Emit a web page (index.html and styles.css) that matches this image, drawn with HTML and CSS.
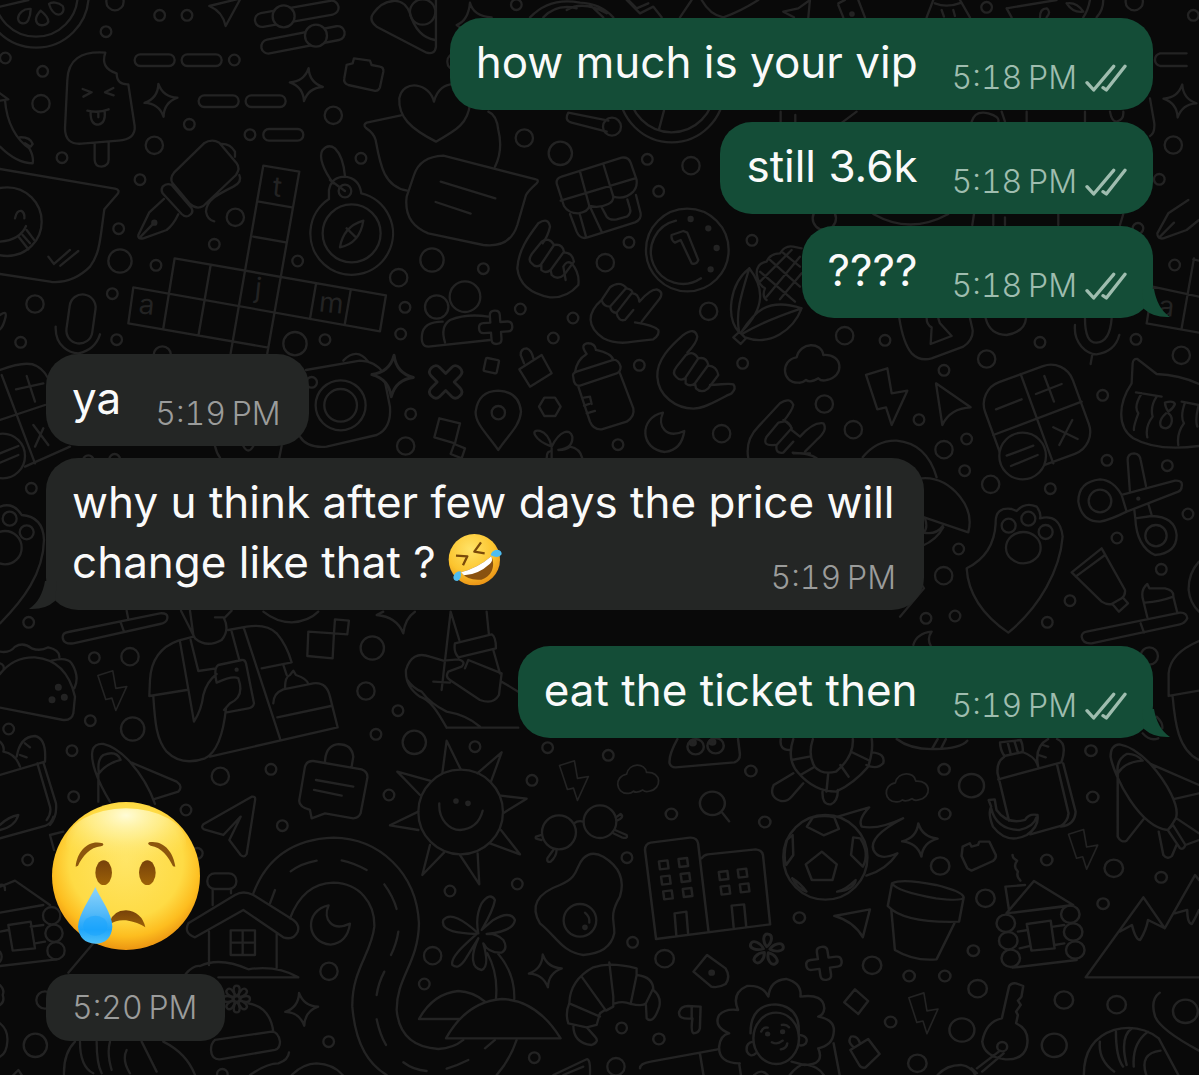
FILE: index.html
```html
<!DOCTYPE html>
<html lang="en">
<head>
<meta charset="utf-8">
<meta name="viewport" content="width=device-width, initial-scale=1">
<title>Chat</title>
<link rel="stylesheet" href="styles.css">
</head>
<body>
<svg class="wallpaper" viewBox="0 0 1199 1075" preserveAspectRatio="xMidYMin slice" aria-hidden="true">
<defs>
<marker id="ring-s" class="doodle" markerUnits="userSpaceOnUse" markerWidth="60" markerHeight="60" refX="30" refY="30"><circle cx="30" cy="30" r="16"/></marker>
<marker id="ring-m" class="doodle" markerUnits="userSpaceOnUse" markerWidth="80" markerHeight="80" refX="40" refY="40"><circle cx="40" cy="40" r="26"/></marker>
<marker id="ring-l" class="doodle" markerUnits="userSpaceOnUse" markerWidth="90" markerHeight="90" refX="45" refY="45"><circle cx="45" cy="45" r="35"/></marker>
<marker id="pane" class="doodle" markerUnits="userSpaceOnUse" markerWidth="60" markerHeight="60" refX="30" refY="30"><path d="M17 19L41 16L44 40L20 43Z"/></marker>
<path id="star" d="M0-50Q8-8 50 0Q8 8 0 50Q-8 8-50 0Q-8-8 0-50Z"/>
<path id="plus" d="M-15-15V-36Q-15-50 0-50T15-36V-15H36Q50-15 50 0T36 15H15V36Q15 50 0 50T-15 36V15H-36Q-50 15-50 0T-36-15Z"/>
<path id="cloud" d="M-42 53C-92 55-97-15-47-23C-37-70 28-70 33-30C93-35 98 35 43 45Q28 50 18 40Q-7 55-19 45Q-32 55-42 53Z"/>
<path id="bolt" d="M-62-65L2-85L15-10L62-18L15 85L-2 32L-28 38Z"/>
<path id="moon" d="M-6-60C-80-45-75 52 0 58Q50 52 58-5C5 20-25-18-6-60Z"/>
<path id="petal" d="M0-8C-12-20-12-40 0-40S12-20 0-8Z"/>
<path id="fingers" d="M858 765Q880 750 895 775M828 830Q815 820 830 800L858 765M895 775L855 835Q840 845 828 830M895 775Q920 770 925 795L885 850Q870 862 857 850V835M925 797Q950 798 955 825L925 865Q905 882 888 865L885 850"/>
</defs>
<g class="doodle" transform="scale(.3333)">
<polyline class="rings-s" points="318,95 479,46 561,46 16,174 128,214 186,473 568,373 420,539 703,180 750,404 1083,475 356,686 468,796 643,733 893,783 337,881 62,1027 350,1019 975,1019"/>
<polyline class="rings-m" points="345,5 123,311 463,436 1000,346 706,652 105,912 487,1065 1368,185"/>
<polyline class="rings-l" points="360,783 885,1031"/>
<circle cx="108" cy="-15" r="158"/><circle cx="108" cy="-15" r="125"/>
<path d="M0 20L85 0M92 27C70 25 55 40 54 55C56 72 75 75 84 62C90 50 92 40 92 27ZM122 32C110 45 104 60 112 70C122 80 140 76 145 65C145 50 132 40 122 32ZM147 12C155 5 175 6 188 18C194 30 188 44 175 44C160 42 152 28 147 12ZM628 18L722-5L677 78Q668 35 628 18Z"/>
<rect x="-20" y="-21" width="254" height="42" rx="21" transform="translate(785 60) rotate(-10)"/>
<rect x="-20" y="-21" width="254" height="42" rx="21" transform="translate(804 140) rotate(-11)"/>
<circle class="solid" cx="851" cy="49" r="33"/><circle class="solid" cx="948" cy="107" r="33"/>
<path d="M1308 0V140Q1305 165 1280 158L1130 80Q1105 60 1120 40Q1145 5 1180 3Q1215 0 1230 40Q1250 110 1305 120"/><circle cx="1268" cy="36" r="38"/>
<rect x="404" y="163" width="120" height="35" rx="17"/><rect x="545" y="163" width="120" height="35" rx="17"/><rect x="596" y="286" width="120" height="35" rx="17"/><rect x="737" y="286" width="120" height="35" rx="17"/><rect x="790" y="387" width="120" height="35" rx="17"/>
<use href="#star" transform="translate(483 301) rotate(-9)"/><use href="#star" transform="translate(919 254) rotate(8)"/>
<path d="M1040 195L1058 190L1062 175L1110 182L1115 195L1140 200Q1152 202 1150 215L1140 262Q1135 275 1122 272L1045 255Q1030 250 1033 235Z"/>
<path d="M1302 305C1290 250 1210 235 1198 295C1195 350 1230 385 1308 425C1370 390 1405 370 1410 310C1405 240 1320 230 1302 305ZM1203 346L1100 368Q1088 374 1098 384Q1122 400 1127 420C1140 490 1150 560 1222 572"/>
<path d="M316 158Q205 150 202 240L195 385Q195 435 245 431L355 422Q408 418 404 378L385 253Q350 255 350 220Q300 205 316 158ZM284 430V480Q285 500 305 500Q326 498 326 478V425M248 267L275 277L250 290M340 264L315 277L341 286M262 332Q295 340 326 328M272 334Q270 374 295 374Q318 370 314 332M295 338V352"/>
<path d="M0 280L25 298L0 302M15 300C20 370 50 420 88 445Q102 470 98 490Q50 490 0 440M58 412Q90 410 98 432L92 440L75 430"/>
<path d="M0 507L345 566Q362 570 352 583L313 628C300 720 300 760 270 800Q220 850 155 846L0 822M0 725Q60 720 78 678M45 655Q50 630 65 633Q75 640 73 655M57 712L85 748M68 705L90 730M80 690L104 722M145 770L162 792L210 750M181 797L235 753"/><circle cx="22" cy="665" r="103"/>
<path d="M612 430Q635 415 658 428L710 490Q722 505 708 525L610 618Q590 630 570 612L518 550Q508 535 522 518ZM488 560Q500 548 515 555L575 625Q582 640 565 648Q555 652 545 642L488 580Q482 570 488 560ZM492 597L448 637L415 705Q412 718 430 715L500 690Q520 675 535 643M422 710L463 668M662 432Q690 430 705 455V470M718 525Q728 545 700 560C650 585 620 600 618 635Q622 660 643 664"/><circle class="dot" cx="463" cy="668" r="6"/>
<path d="M987 597A124 124 0 1 0 1084 580M987 597V570Q995 530 1035 530Q1078 535 1084 580M1000 550C970 510 955 470 968 450Q985 430 1005 445Q1030 470 1035 528M990 540L1035 573M1090 662Q1080 730 1020 742Q1030 680 1090 662M1040 685L1068 712"/><circle cx="1055" cy="700" r="87"/><circle cx="1035" cy="573" r="19"/>
<path d="M898 515L790 497L692 1060M898 515L802 1060M777 605L876 622M760 710L858 727M524 775L1158 886L1140 994L400 862L385 970L805 1043M524 775L490 985M632 795L596 1003M948 852L930 957M1052 872L1034 975"/>
<g class="letters"><text x="815" y="588" transform="rotate(6 815 588)">t</text><text x="762" y="892" transform="rotate(6 762 892)">j</text><text x="414" y="940" transform="rotate(6 414 940)">a</text><text x="955" y="934" transform="rotate(6 955 934)">m</text></g>
<rect x="-39" y="-74" width="78" height="148" rx="39" transform="translate(243 957) rotate(8)"/>
<path d="M167 980C165 1040 210 1060 235 1060Q285 1050 300 1003M0 945Q20 930 17 950Q10 980 0 988"/>
</g>
<g class="doodle" transform="translate(400 100) scale(.3333)">
<polyline class="rings-l" points="96,480 481,160 110,621"/>
<polyline class="rings-m" points="373,114 873,197 -4,533 616,488 926,634 965,1001 17,1038"/>
<polyline class="rings-s" points="250,506 15,622 361,627 519,654 460,714 742,178 776,274 687,427 1056,421 718,796 1028,790 32,942 654,1034 2,702"/>
<path d="M265 35Q290 45 295 90Q310 150 285 200M130 167Q60 170 42 225L20 290Q10 370 85 400L250 435Q330 445 352 375L378 285Q385 272 410 250Q418 240 408 238ZM122 245L286 295M107 306L212 341M505 38Q492 62 515 68L620 95M505 38L625 62M792 32L777 88"/>
<circle cx="636" cy="80" r="27"/><circle cx="815" cy="-30" r="157"/><circle cx="815" cy="-30" r="127"/>
<path d="M470 250Q468 235 485 230L665 173Q685 170 692 188L710 240Q712 260 702 272M482 302L705 235M470 250L492 318Q505 340 535 340Q565 335 568 318Q600 325 625 312Q640 305 640 290Q675 300 700 275M540 215L568 318M610 192L640 290M510 342L530 395Q540 418 560 413L705 367Q725 358 722 340L708 285M540 345L558 410M570 320L605 395M605 322L620 350Q630 362 650 358L680 350Q695 340 690 325L682 298"/>
<use href="#fingers" transform="translate(-433 -340)"/><use href="#fingers"/>
<path d="M490 500Q500 480 515 490Q540 520 535 555Q500 595 450 592Q360 575 352 505C355 450 385 410 415 370Q445 350 450 380Q445 405 428 430M490 500L497 540"/>
<path d="M605 600C560 640 560 680 610 715Q650 735 700 725L760 718Q780 705 775 690Q760 675 705 667M725 665L780 595Q792 575 770 568Q750 568 718 605M605 600L630 562Q660 540 680 565M605 600Q610 620 630 620L678 565M630 620Q635 640 650 638L695 580M680 565Q700 570 697 580Q715 580 718 605M650 640Q655 665 675 660L700 630"/>
<path d="M862 758Q890 730 892 710Q885 680 850 705C810 740 770 780 772 830C775 890 830 925 880 926C920 925 960 895 995 880Q1010 865 1000 853C985 848 960 855 930 855"/>
<circle cx="862" cy="450" r="124"/><path d="M828 362A96 96 0 1 0 903 535M815 405L850 393L862 398L895 480Q890 495 875 490L842 420L825 428Q812 420 815 405Z"/>
<g class="dot"><circle cx="872" cy="357" r="6"/><circle cx="925" cy="385" r="6"/><circle cx="950" cy="444" r="6"/><circle cx="932" cy="508" r="6"/></g>
<path d="M1048 505C990 550 975 650 1018 698M1048 505C1025 580 1005 640 1018 698M1048 505C1090 560 1100 620 1025 695C1060 640 1100 590 1205 625C1180 690 1110 740 1035 712M1205 625C1130 650 1080 670 1030 700M1018 696L1000 712L1022 732L1038 715ZM1070 520Q1070 490 1100 485Q1110 460 1140 460Q1155 435 1180 440L1205 445M1070 520Q1075 555 1095 565Q1085 590 1100 600M1080 515L1185 605M1110 480L1200 560M1145 455L1200 500M1100 590L1200 470M1075 550L1175 450M1140 598L1205 520"/>
<circle cx="195" cy="590" r="46"/><path d="M128 665Q70 665 66 705Q62 740 85 740L270 720M135 727Q120 680 150 660Q200 640 265 650"/>
<use class="solid" href="#plus" transform="translate(287 682) rotate(-4)"/><use href="#plus" transform="translate(137 846) rotate(45) scale(1.2)"/>
<rect x="-20" y="-20" width="40" height="40" rx="4" transform="translate(274 797) rotate(12)"/>
<path d="M358 808L425 765L455 820L390 860ZM372 790L362 765Q362 745 380 745Q395 750 400 775M433 893H465L482 920L466 948H433L417 920Z"/>
<path d="M520 832Q515 820 530 815L640 780Q655 778 662 800Q662 815 650 820L540 857Q522 860 520 832ZM525 817Q530 780 560 762Q540 735 560 730Q585 728 588 750Q635 760 640 780M535 860L570 965Q580 990 605 988L680 965Q705 950 700 925L660 820M552 893L570 890L575 912M552 917L568 912M560 940L585 933"/>
<path d="M295 1050C260 1000 225 970 227 935Q235 873 295 872Q358 875 363 935C360 980 320 1010 295 1050ZM118 955L180 970L165 1030L103 1012ZM163 1032L195 1045L185 1075M163 1032L152 1062L185 1075M455 1040C400 1020 390 985 420 993Q445 1000 455 1040C480 990 510 985 517 1010Q520 1045 475 1050Q500 1050 510 1040Q540 1045 547 1075M455 1045V1075M440 1075Q440 1050 455 1055"/><circle cx="295" cy="938" r="20"/>
<use href="#moon" transform="translate(795 998)"/>
<path d="M1045 1075Q1035 1020 1075 980L1140 910Q1170 890 1180 915Q1178 930 1150 965M1150 965Q1165 960 1175 985M1125 1035Q1085 1040 1100 1010L1135 968L1150 965M1175 985L1130 1035Q1125 1062 1150 1058L1180 1025M1180 1060H1230"/>
</g>
<g class="doodle" transform="translate(780 200) scale(.3333)">
<polyline class="rings-m" points="194,407 620,477 133,612 220,689 492,749 1204,466"/>
<polyline class="rings-s" points="315,421 492,511 780,427 1068,418 417,659 560,717 968,586 981,781 1184,195 1074,85"/>
<circle cx="133" cy="55" r="35"/>
<path d="M280 42Q390 105 505 42M582 42L577 75M640 42V75M835 42V75M1030 42L1020 75M675 52V75M1225 0L1165 40L1132 100Q1132 118 1150 115L1220 90L1257 60M1138 112L1182 68M1100 370L1118 260L1257 290M1100 370L1257 398M1242 175L1205 385M1240 178L1257 182"/>
<g class="letters"><text x="1133" y="345" transform="rotate(6 1133 345)">a</text></g>
<path d="M358 355Q370 430 395 460Q420 485 455 475L550 440Q580 420 578 390L570 355M440 355Q440 375 455 382L452 432L515 408L480 370L475 355M617 355Q630 405 680 405Q735 395 738 355M915 355Q915 430 950 428Q990 425 995 355M885 375C880 430 920 462 950 463Q1005 455 1018 405M937 463L932 492"/>
<use href="#cloud" transform="translate(97 495)"/><use href="#bolt" transform="translate(320 590)"/>
<path d="M468 550L572 622Q510 625 487 675Z"/>
<rect x="-140" y="-140" width="280" height="280" rx="70" transform="translate(771 654) rotate(-20)"/>
<path d="M722 522L820 790M640 705L905 605M648 628L725 598M768 582L845 552M793 528L822 605M820 682L893 717M877 660L838 735"/><circle class="solid" cx="728" cy="768" r="70"/><path d="M680 767L760 737M693 798L773 765"/>
<path d="M1257 552Q1200 525 1130 522L1072 477Q1060 475 1058 490L1055 550C1015 610 1010 680 1060 715Q1130 755 1257 738M1068 577L1145 590M1205 605L1257 615M1085 580Q1060 620 1075 640Q1060 680 1062 690M1130 590Q1110 620 1118 650Q1095 680 1102 712M1215 608Q1200 650 1212 670Q1190 700 1195 735M1255 620Q1245 660 1252 680M1155 608Q1180 600 1185 612Q1180 625 1165 635Q1155 620 1155 608M1158 640C1135 660 1135 685 1158 685C1180 680 1180 650 1165 640"/>
<path d="M35 690L60 710Q100 665 130 670Q145 690 110 720L75 755M10 660Q35 675 35 690M38 758Q90 760 110 775M248 772Q290 720 350 722Q440 730 470 832"/>
</g>
<g class="doodle" transform="translate(900 440) scale(.3333)">
<polyline class="rings-m" points="272,133 131,407 748,648"/>
<polyline class="rings-s" points="194,92 451,146 176,327 78,535 165,528 442,547 510,482 802,77 864,222 651,294 784,388"/>
<path d="M66 115Q130 110 180 170Q220 220 205 277L66 230M70 278Q110 285 128 258M66 318Q110 300 130 262M75 235Q85 265 70 278M66 435L72 445L0 530M40 615Q50 580 95 575Q80 595 92 617M728 880Q750 905 775 895M770 830Q790 850 787 865"/>
<path d="M200 385C270 350 285 290 287 250Q285 200 335 207L350 213Q375 185 410 200Q425 220 420 235Q480 220 488 290C480 390 420 500 325 578C255 530 205 470 200 385Z"/><circle cx="326" cy="257" r="21"/><circle cx="385" cy="236" r="21"/><circle cx="437" cy="276" r="21"/><ellipse cx="370" cy="323" rx="52" ry="47"/>
<path d="M665 165Q640 120 600 118Q535 125 535 185Q545 245 600 245Q630 240 680 215ZM665 165L825 122Q850 120 845 140Q845 150 835 155L680 215M690 158L683 60Q683 40 703 40Q720 42 722 60L738 138M703 210L706 235M745 192L755 225M706 235Q710 320 765 345Q830 340 830 285Q825 230 755 228Z"/><circle cx="600" cy="183" r="34"/><circle cx="768" cy="287" r="32"/><circle class="dot" cx="715" cy="176" r="3"/>
<path d="M605 325L675 450Q677 465 665 475L635 492Q620 495 605 485L515 397ZM527 410L615 345M637 492L657 515L684 490L668 472M545 590Q545 578 560 575L840 518Q860 517 862 535Q855 550 840 553L575 610Q548 612 545 590ZM722 550L732 578M742 532L730 482Q720 450 742 432L748 445L795 445Q822 450 820 470L832 518M735 488Q780 485 820 470M897 365Q865 400 866 450Q870 490 897 515M897 603Q810 640 806 700V768L897 752M818 770C825 850 835 930 897 960"/>
</g>
<g class="doodle" transform="translate(0 340) scale(.3333)">
<polyline class="rings-s" points="935,127 94,445 265,362 344,358"/>
<path d="M918 90L1080 62Q1130 65 1150 100L1170 200Q1175 265 1130 285L980 320Q920 325 900 290M1030 62Q1070 20 1105 65"/><circle cx="1022" cy="196" r="75"/><circle cx="1022" cy="196" r="49"/>
<use class="solid" href="#star" transform="translate(1178 108) rotate(4) scale(1.25)"/>
<path d="M0 90Q80 60 110 78Q140 95 150 130M5 105L105 370M0 240L135 195M48 148L130 130M80 108L105 185M100 255L145 315M130 265L105 320M75 380L210 320"/><circle class="solid" cx="8" cy="348" r="67"/><path d="M0 340L55 318M0 368L55 345"/>
<path d="M0 500Q40 485 65 525Q130 530 132 600C130 700 70 780 0 850M645 318Q650 340 660 353M845 318L838 353M730 318Q745 345 760 318"/><circle cx="29" cy="536" r="21"/><circle cx="80" cy="577" r="21"/><circle cx="15" cy="623" r="50"/>
</g>
<g class="doodle" transform="translate(0 600) scale(.3333)">
<polyline class="rings-l" points="398,387 1117,144 1243,427"/>
<polyline class="rings-m" points="390,170 1098,273 661,529"/>
<polyline class="rings-s" points="86,67 283,173 271,362 26,387 216,452 221,590 1194,332 1128,403 813,508 1425,440 1167,585 558,630"/>
<path d="M188 112Q188 98 205 96L480 40Q505 38 502 55Q500 68 480 72L220 130Q190 134 188 112ZM362 67L372 95M380 32L385 58"/>
<path d="M0 222Q40 170 105 172Q200 180 225 290L220 340Q215 362 190 360L0 323M0 155Q30 160 45 140Q70 125 95 145Q120 155 145 142Q180 150 178 172M155 182Q200 170 215 190Q240 230 223 265M0 190Q15 195 10 210"/>
<g class="dot"><circle cx="175" cy="262" r="7"/><circle cx="156" cy="299" r="7"/><circle cx="193" cy="292" r="7"/><circle cx="710" cy="209" r="3"/></g>
<use href="#bolt" transform="translate(337 272) scale(.7)"/>
<path d="M448 288L450 240Q455 150 535 122L580 110M448 288L560 270M460 290C465 370 470 420 500 455Q545 500 615 475Q665 450 678 325M540 125L582 365Q605 330 610 285Q620 245 650 222M572 120L595 213L648 205M543 32L580 105L585 115Q620 145 665 120Q690 90 672 55L695 32M570 32L580 105M645 52H670M685 90L740 80Q800 70 830 100Q860 135 875 187L785 205M732 85L840 415M695 95L718 180M655 195L725 180Q735 178 738 190L762 310Q760 322 745 325L680 337M655 195Q640 205 650 248Q700 225 715 235Q735 290 690 310L672 330M850 195L860 225M630 470L1013 382L990 290Q980 245 940 250L850 268Q820 280 820 310M832 352L993 318M855 265Q855 230 870 225L880 212L888 225Q920 235 925 252"/>
<path d="M925 95L1002 100L998 175L922 168ZM1005 58L1047 62L1042 103L1002 100ZM1150 35L1130 45Q1190 50 1210 100Q1215 55 1245 35M790 35Q830 67 875 67Q925 65 955 35"/>
<path d="M1340 383C1310 330 1290 300 1260 290Q1215 260 1218 210Q1235 150 1290 170L1330 182L1375 178Q1400 185 1385 200L1345 215Q1335 230 1350 240L1440 300Q1480 315 1497 285L1505 220L1405 180L1395 205M1340 383H1555M1222 240Q1240 265 1265 275Q1290 310 1340 335Q1400 345 1440 380M1505 245L1555 275M1352 35L1325 270M1300 245L1350 248M1352 35L1378 120M1460 35L1467 105M1365 130L1475 103Q1488 110 1488 145L1375 172Q1360 155 1365 130ZM1480 150L1500 220"/>
<path d="M0 425Q15 440 10 455Q45 460 60 500M50 470Q60 410 105 408Q140 415 135 485L0 525M75 430L90 442M60 465L80 472M112 490L150 620Q155 640 140 660M130 487L168 610Q172 650 150 675"/>
<path d="M330 605C290 540 270 480 278 450Q285 430 310 432Q345 440 385 480Q440 540 465 612M297 520Q290 480 310 465Q350 450 362 480Q320 490 297 520M295 520V605M395 488L530 545Q550 560 535 575L465 597"/>
<path d="M975 490Q975 440 1010 433Q1055 430 1060 470L1055 500M940 483L1085 508Q1105 515 1102 535L1082 640Q1075 655 1060 655L975 640L935 655L930 630Q895 620 898 600L915 500Q920 482 940 483ZM948 540L1060 560M942 570L1025 587"/>
</g>
<g class="doodle" transform="translate(200 730) scale(.3333)">
<polyline class="rings-m" points="387,724 698,677 1248,1010"/>
<polyline class="rings-s" points="247,287 1043,53 1225,76 996,151 750,483 952,462 1281,383 1298,637 673,762 386,935 1265,894 1003,983 67,1033"/>
<path d="M10 283L155 200Q168 198 165 212L140 372Q132 385 122 375L88 330L122 260L70 315L12 298Q2 292 10 283Z"/>
<circle cx="782" cy="246" r="127"/><path d="M727 130L740 32L782 118M832 130L905 67L873 155M903 197L980 206L912 248M903 300L960 373L870 340M833 370L838 463L780 375M732 368L667 435L690 345M655 300L570 286L655 245M660 195L592 125L692 153M718 220C715 270 750 300 780 300Q835 295 848 242"/>
<g class="dot"><circle cx="768" cy="213" r="5"/><circle cx="804" cy="220" r="5"/><circle cx="1155" cy="592" r="5"/></g>
<use href="#bolt" transform="translate(1122 152) scale(.7)"/><use href="#cloud" transform="translate(1315 150) scale(.75)"/>
<circle cx="1077" cy="307" r="51"/><circle cx="1200" cy="275" r="49"/><path d="M1122 280Q1135 270 1150 275M1025 315L1008 320Q1003 328 1025 330M1062 357L1042 385Q1040 398 1052 395Q1070 380 1070 358M1248 262L1262 252Q1275 262 1250 272M1245 300L1280 315Q1285 328 1265 322L1240 310"/>
<path d="M160 490Q220 330 400 323C540 325 650 430 657 580C655 700 590 740 590 840Q600 950 715 957Q760 955 790 930M270 565Q310 460 400 458C480 460 525 520 523 590C515 670 455 720 457 830C465 930 500 1000 560 1035M950 930Q930 990 890 1035M272 424Q305 400 350 392M425 391Q460 398 500 420M553 463Q580 500 590 537M595 605Q590 640 573 675M553 725Q535 760 530 795M530 868Q540 915 558 945M610 997Q640 1020 680 1023M740 1016Q775 1005 805 990M855 955L885 930M210 520L225 480"/>
<path d="M-35 580L105 495Q130 480 160 495L280 570Q300 585 293 605Q280 632 250 622L130 540L-15 622Q-50 610-35 580M27 605V705M230 610V715M38 525V478M93 490V478M-43 732Q-20 705 0 708Q60 680 145 718Q230 705 295 742H55M92 601H165V675H92ZM128 601V675M92 638H165"/><rect x="22" y="430" width="87" height="47" rx="22"/>
<use href="#moon" transform="translate(392 586)"/>
<path d="M45 930L215 905Q235 905 240 935Q240 955 225 960L60 988Q35 990 33 960Q33 940 45 930M145 820Q210 830 220 905M150 1035Q200 1000 235 1000Q265 990 267 967M275 1035Q310 1000 350 1000Q400 1002 428 1035"/>
<g transform="translate(110 807)"><use href="#petal"/><use href="#petal" transform="rotate(45)"/><use href="#petal" transform="rotate(90)"/><use href="#petal" transform="rotate(135)"/><use href="#petal" transform="rotate(180)"/><use href="#petal" transform="rotate(225)"/><use href="#petal" transform="rotate(270)"/><use href="#petal" transform="rotate(315)"/></g>
<use href="#star" transform="translate(305 838) rotate(-9)"/><use href="#star" transform="translate(1036 723) rotate(-9)"/>
<path d="M835 610C790 570 750 545 730 570C720 605 780 610 830 612C800 640 750 680 757 705Q775 720 795 690L835 625C810 680 815 715 845 720Q870 710 850 640Q865 670 905 668Q925 655 910 630Q890 610 860 612Q940 605 945 570Q930 540 880 570L845 600Q880 540 885 510Q870 485 845 520Q825 560 835 610M862 670Q895 730 888 805M895 672Q945 730 943 808M780 867H657Q700 790 775 783Q820 785 855 815M738 925Q800 815 905 807Q1010 810 1082 925Z"/>
<path d="M1150 385Q1175 360 1210 380C1260 410 1275 450 1260 500C1225 560 1245 575 1243 610Q1230 670 1150 675C1085 665 1070 620 1020 580C990 530 1010 490 1080 465C1140 440 1125 410 1150 385ZM1155 548Q1170 560 1168 578"/><circle cx="1140" cy="571" r="49"/>
<path d="M1108 820Q1110 750 1180 712Q1230 695 1310 715V735Q1360 740 1360 780Q1385 800 1378 830Q1360 885 1340 865L1338 825M1108 820Q1095 850 1105 880L1160 892L1190 885L1200 850L1215 840M1108 820L1200 860M1145 740L1218 842L1240 830V800L1228 697M1245 820Q1270 812 1292 822L1310 735M1292 822Q1330 830 1338 820L1360 775M1120 885Q1120 940 1175 945Q1200 935 1185 920L1160 892M1060 1035L1160 988Q1172 985 1170 1035M1090 1035L1150 1010"/>
</g>
<g class="doodle" transform="translate(640 730) scale(.3565 .3333)">
<polyline class="rings-l" points="930,167 903,900 1162,946 1530,844 203,220"/>
<polyline class="rings-m" points="69,686 842,408 969,505 651,706 947,776 1189,810 1337,824 778,1000 1329,415 1026,580 1033,632 1040,685 1207,553 1215,606 1221,660"/>
<polyline class="rings-s" points="311,123 88,252 350,276 853,118 855,252 1141,390 1270,201 1265,62 1299,521 1462,442 447,563 935,662 755,738 855,738 703,876 53,927"/>
<polyline class="panes" points="66,405 121,398 72,451 127,443 78,495 133,488 234,437 287,430 239,481 293,474"/>
<path d="M105 27Q80 75 83 100Q88 113 100 112L265 97Q282 90 280 70L275 27M230 247L250 274"/><circle cx="156" cy="50" r="23"/><circle cx="212" cy="47" r="23"/>
<g class="dot"><circle cx="148" cy="38" r="8"/><circle cx="203" cy="36" r="8"/><circle cx="201" cy="728" r="6"/><circle cx="358" cy="912" r="4"/><circle cx="400" cy="905" r="4"/></g>
<path d="M45 627L14 360Q14 342 30 338L140 323Q160 322 163 340L192 603M173 385Q178 375 190 373L325 358Q342 360 345 375L365 583L45 627M97 550L130 545L135 612M97 550L102 618M257 527L292 523L298 590M257 527L263 595"/>
<path d="M430 27Q410 90 445 130Q490 185 550 185Q600 160 640 110Q655 60 650 27M485 27Q470 75 490 110Q510 135 550 125Q600 80 597 27M425 90L475 80M450 135L490 110M523 185L528 130M585 140L562 105M640 90L592 65M395 27Q390 60 420 60M430 130L375 165Q360 200 395 213Q415 215 425 200L458 160M512 185Q510 225 535 223Q555 215 555 180M650 67Q690 70 682 100Q665 120 635 105M720 27Q760 60 830 57Q900 55 918 32M820 55L835 27M845 55L858 27"/>
<use href="#cloud" transform="translate(750 176) scale(.72 .75)"/><use href="#star" transform="translate(785 330) rotate(-5)"/>
<ellipse cx="520" cy="382" rx="118" ry="127"/><path d="M510 365L552 403L540 450L482 450L465 403ZM468 290L485 262Q520 255 545 262L558 297L515 316ZM428 315L412 330Q400 380 410 405L430 375ZM598 322L618 325Q645 370 625 410L592 375ZM427 445Q450 460 467 485Q440 475 427 445M553 485Q575 480 605 450Q600 480 553 485M555 260Q600 245 643 232Q610 270 622 290Q670 300 738 265Q640 320 655 360Q670 395 722 370Q690 420 635 437"/>
<path d="M905 350L925 340L930 350L948 345L952 335L980 335L998 375Q1000 385 990 393L930 422L918 415L902 378ZM545 558L645 538L625 622Q600 575 545 558Z"/>
<path d="M1010 37L1068 30Q1076 50 1073 66L1022 78Q1010 60 1010 37ZM1032 40L1040 72M1050 33L1060 67M1022 80Q1000 95 1003 130L1035 272M1073 66Q1110 80 1117 110M1005 148L1182 97Q1200 40 1170 27M1117 110Q1105 50 1145 27M1130 45L1145 50M1118 75L1138 82M1170 105L1202 250Q1200 275 1180 288L1095 313M1187 100L1222 245Q1220 285 1180 290M978 210L995 208L1000 240Q1030 285 1080 270Q1090 250 1115 255Q1120 290 1085 315Q1030 345 990 290Q975 250 985 230ZM985 235Q1000 300 1065 300Q1105 290 1112 262"/>
<path d="M1480 300C1400 290 1330 140 1320 80Q1320 45 1345 43Q1385 50 1430 100C1480 160 1515 230 1503 265Q1490 290 1480 300M1340 130Q1335 90 1365 72Q1390 70 1410 92Q1360 95 1340 130M1340 130V320Q1350 340 1365 332L1412 268M1435 103L1568 165M1500 207L1568 190M1455 305L1468 375Q1480 390 1492 378L1505 345M1480 300L1495 285L1530 345Q1525 360 1515 355ZM1505 265L1568 310M1530 345L1568 330"/>
<path d="M707 460Q735 445 830 465Q905 485 908 502Q905 515 830 505Q720 485 707 460ZM707 460L695 528Q740 580 895 575L908 502M705 540L715 660Q770 695 832 688L882 580"/>
<path d="M1028 550L1105 453L1215 525ZM1035 540L1025 470L1080 465M1045 375Q1045 385 1058 392Q1045 410 1060 425Q1055 440 1067 452M1050 548L1190 530M1085 582L1152 572L1163 655L1098 662ZM1060 605L1088 600M1065 655L1095 648M1160 590L1190 585M1163 645L1190 640M1045 713L1225 690"/>
<use href="#bolt" transform="translate(1243 358) scale(.66 .7)"/><use href="#bolt" transform="translate(795 850) scale(.66 .72)"/>
<path d="M1568 742H1250L1412 502L1472 595L1557 435L1568 450M1345 605L1380 585Q1390 630 1403 630Q1420 600 1425 570L1472 595M1500 550L1535 540Q1535 580 1548 582Q1560 560 1568 540"/>
<g transform="translate(355 660) scale(1.2)"><use href="#petal" transform="rotate(5)"/><use href="#petal" transform="rotate(77)"/><use href="#petal" transform="rotate(149)"/><use href="#petal" transform="rotate(221)"/><use href="#petal" transform="rotate(293)"/></g>
<use href="#plus" transform="translate(516 700) rotate(-8)"/>
<path d="M188 675L240 715Q255 740 240 762Q220 775 200 770L150 725ZM603 778L640 813L612 852L573 817ZM170 830L168 895Q165 910 150 910Q142 905 147 865Q105 870 110 845Q115 828 135 828ZM145 830V865M590 960L640 927L672 972L632 1013Q620 1015 615 1005ZM600 952Q580 935 592 920Q610 915 617 940"/>
<path d="M280 1000Q220 1000 222 950Q225 915 250 910Q205 890 222 855Q240 835 275 840Q255 790 300 768Q345 765 360 800Q365 750 410 747Q455 760 450 800Q515 790 517 835Q515 855 500 860Q550 870 543 910Q540 945 500 955Q520 1005 460 1005L425 995M310 910Q310 825 380 823Q450 830 445 910M317 935Q295 940 300 965Q310 985 325 970M447 915Q475 920 465 940Q455 950 445 945M340 905Q345 890 358 893M398 885Q410 882 418 892M370 937Q385 945 400 932M395 958Q412 955 413 940M0 1015Q0 1000 30 995L218 958M168 970L178 1035M278 1000L283 1035M543 940L560 1035M320 1035Q340 1015 358 1035M420 1035Q450 995 470 1005Q500 1010 515 1035"/><ellipse cx="382" cy="925" rx="64" ry="77"/>
<path d="M1015 865L1035 770Q1040 758 1055 760L1075 768L1070 800L1060 812L1068 825L1055 845L1060 855L1055 880Q1095 900 1085 950Q1075 990 1025 988Q965 980 960 935Q970 875 1015 865ZM1010 962L945 1015M1020 970L960 1025M930 1015L945 1030M835 1035Q860 1005 900 1005Q930 1010 940 1035"/><circle cx="1016" cy="950" r="14"/>
<path d="M1458 788Q1430 810 1445 860Q1460 900 1568 962M1245 1035Q1245 930 1330 900Q1400 880 1455 925L1510 1035M1290 935Q1285 990 1330 1025M1335 905Q1335 980 1355 1010M1380 895Q1345 920 1365 1005M1425 905Q1380 940 1385 1010M1460 962Q1400 970 1420 1035"/>
</g>
<g class="doodle" transform="translate(0 790) scale(.3333)">
<polyline class="rings-l" points="106,766"/><polyline class="rings-m" points="135,630 155,377 162,430 168,482"/><polyline class="rings-s" points="83,210 592,190"/>
<path d="M0 120Q45 110 55 75Q25 80 0 105M0 145L135 108Q155 100 160 80M205 548L280 460M150 135L190 125M150 135L162 180M0 290L45 272L150 345M0 368L130 345M25 405L92 395L105 475L38 482ZM0 425L25 420M92 410L130 405M105 460L135 455M0 528L170 508M0 285Q15 280 15 300M0 485Q10 500 0 515M0 700Q25 720 22 755Q20 790 0 800M0 585Q15 600 8 615Q15 635 0 645M192 855Q190 790 225 755M240 755Q240 830 280 850M290 755Q290 820 305 850M330 755Q320 790 335 840M380 780Q365 810 390 850M425 755L470 845M490 755Q560 790 585 855M40 855L55 840L65 855"/>
</g>
<g class="doodle" transform="translate(920 10) scale(.3333)">
<polyline class="rings-m" points="760,405"/><polyline class="rings-s" points="718,508 820,16"/>
<path d="M800 130H720Q705 135 705 149Q705 163 720 168H800M690 265L703 340Q705 370 690 378M155 335Q165 300 205 310Q240 320 235 335M245 305L255 335M320 305V335M495 305V335M570 305Q575 335 590 335Q612 330 610 305"/>
<use href="#star" transform="translate(780 273) rotate(8)"/>
</g>
<g class="doodle" transform="translate(440 0) scale(.3333)">
<polyline class="rings-s" points="229,14 1640,22"/><polyline class="rings-m" points="2083,5"/>
<path d="M90 8Q100 48 155 52M90 8Q85 62 50 75L75 92M270 52Q330-10 420 8Q480 10 520 52M310 52Q350 10 410 25M380 30Q430 0 500 40M450 15L490 52M560 0L600 40L640 20L665 52M555-10L590 25L625 10M720 52L755 0M785 0Q810 45 850 52Q900 35 955 0M1030 35L1075 25L1110 0L1105 52M1030 35L1062 52M1195 15L1210 52M1195 10L1215 0M1255 0L1275 52M1480 0L1460 52M1560 0L1590 52M1505 30L1512 50M1540 30L1545 48M1485 10Q1520 25 1565 8M1700 25L1715 52M1700 25L1850 0M1990 0Q1990 30 1970 52M1950 0Q1945 30 1930 52M1800 52Q1800 25 1820 25Q1835 35 1820 52M1880 10Q1910 5 1930 35Q1900 40 1880 10M1022 335V385M1066 345V375M1250 335L1183 385"/>
<circle class="dot" cx="1236" cy="42" r="5"/>
</g>
</svg>

<svg class="sprites" aria-hidden="true">
<symbol id="checks" viewBox="0 0 126 84"><path d="M6 56L26 78L86 7M54 71L64 78L120 7"/></symbol>
<symbol id="tail" viewBox="0 0 28 30"><path d="M0 0H12C14 12 19 22 28 28Q12 29 2 20Z"/></symbol>
</svg>

<main class="chat">
<article class="bubble out"><p>how much is your vip</p><div class="meta"><time>5:18&#x202F;PM</time><svg class="checks" role="img" aria-label="Delivered"><use href="#checks"/></svg></div></article>
<article class="bubble out"><p>still 3.6k</p><div class="meta"><time>5:18&#x202F;PM</time><svg class="checks" role="img" aria-label="Delivered"><use href="#checks"/></svg></div></article>
<article class="bubble out"><p>????</p><div class="meta"><time>5:18&#x202F;PM</time><svg class="checks" role="img" aria-label="Delivered"><use href="#checks"/></svg></div><svg class="tail"><use href="#tail"/></svg></article>

<article class="bubble in turn"><p>ya</p><div class="meta"><time>5:19&#x202F;PM</time></div></article>
<article class="bubble in long"><p>why u think after few days the price will<br>change like that ? <svg class="rofl" viewBox="60 40 168 162" role="img" aria-label="Rolling on the floor laughing">
<defs><radialGradient id="rofl-face" cx=".42" cy=".3" r=".75"><stop offset="0" stop-color="#ffe368"/><stop offset=".6" stop-color="#fcc52f"/><stop offset="1" stop-color="#e88c12"/></radialGradient></defs>
<circle cx="139" cy="120" r="77" fill="url(#rofl-face)"/>
<path d="M159 68L139 96L170 101M84 108L118 110L105 137" fill="none" stroke="#7a4a0a" stroke-width="7" stroke-linejoin="round"/>
<path d="M99 158Q150 145 190 110C204 140 190 172 160 180Q120 184 99 158Z" fill="#8a5210"/>
<path d="M99 158Q150 145 190 110Q196 124 186 132Q150 165 108 167Z" fill="#fff"/>
<path d="M188 107Q190 92 208 90Q222 92 221 104Q212 118 188 107ZM98 155Q80 155 76 172Q76 184 88 184Q102 178 98 155Z" fill="#4fbdf0"/>
</svg></p><div class="meta"><time>5:19&#x202F;PM</time></div><svg class="tail"><use href="#tail"/></svg></article>

<article class="bubble out turn"><p>eat the ticket then</p><div class="meta"><time>5:19&#x202F;PM</time><svg class="checks" role="img" aria-label="Delivered"><use href="#checks"/></svg></div><svg class="tail"><use href="#tail"/></svg></article>

<article class="sticker">
<svg class="cry" viewBox="153 33 450 450" role="img" aria-label="Crying face">
<defs>
<radialGradient id="face" cx=".5" cy=".4" r=".62"><stop offset="0" stop-color="#ffe566"/><stop offset=".62" stop-color="#fedb45"/><stop offset=".82" stop-color="#fdbd1f"/><stop offset="1" stop-color="#e88c0e"/></radialGradient>
<radialGradient id="shine" cx=".5" cy=".1" r=".7"><stop offset="0" stop-color="#fffcd6"/><stop offset=".45" stop-color="#fff3a0" stop-opacity=".7"/><stop offset="1" stop-color="#ffe566" stop-opacity="0"/></radialGradient>
<linearGradient id="tear" x1="0" y1="0" x2="0" y2="1"><stop offset="0" stop-color="#8fd4fa"/><stop offset=".45" stop-color="#55baf8"/><stop offset=".75" stop-color="#1ea5fb"/><stop offset="1" stop-color="#4fc0f8"/></linearGradient>
<linearGradient id="brown" x1="0" y1="0" x2="0" y2="1"><stop offset="0" stop-color="#77420a"/><stop offset="1" stop-color="#9c6108"/></linearGradient>
</defs>
<circle cx="378" cy="258" r="222" fill="url(#face)"/>
<ellipse cx="378" cy="160" rx="180" ry="105" fill="url(#shine)"/>
<path d="M227 230C232 180 268 148 308 160Q314 166 303 169C270 172 248 198 234 227ZM526 230C520 185 490 150 447 157Q440 163 452 167C485 172 505 200 519 229Z" fill="#8c560d"/>
<ellipse cx="311" cy="248" rx="25" ry="37" fill="url(#brown)"/><ellipse cx="442" cy="248" rx="25" ry="37" fill="url(#brown)"/>
<path d="M330 395Q340 362 378 361Q425 365 436 412Q415 397 378 391Q350 388 330 403Z" fill="url(#brown)"/>
<path d="M286 291C300 325 337 370 337 410Q333 460 286 461Q238 458 234 410C236 370 272 325 286 291Z" fill="url(#tear)"/>
<ellipse cx="286" cy="407" rx="36" ry="30" fill="#18a4fd" opacity=".5"/>
</svg>
<div class="pill"><time>5:20&#x202F;PM</time></div>
</article>
</main>
</body>
</html>
```
FILE: styles.css
```css
:root {
  --wall: #090909;
  --line: #232323;
  --green: #144d37;
  --gray: #242625;
}

* {
  box-sizing: border-box;
}

body {
  position: relative;
  margin: 0;
  min-height: 100vh;
  overflow-x: hidden;
  background: var(--wall);
  color: #fafafa;
  font-family: Inter, "Liberation Sans", sans-serif;
}

/* Wallpaper drawn behind the conversation */
.wallpaper {
  position: absolute;
  inset: 0;
  z-index: -1;
  width: 100%;
  height: 100%;
}

.doodle {
  fill: none;
  stroke: var(--line);
  stroke-width: 7;
  stroke-linejoin: round;
  stroke-linecap: round;
}

.doodle .solid {
  fill: var(--wall);
}

.doodle .dot {
  fill: var(--line);
}

.rings-s,
.rings-m,
.rings-l,
.panes {
  stroke: none;
}

.rings-s {
  marker: url(#ring-s);
}

.rings-m {
  marker: url(#ring-m);
}

.rings-l {
  marker: url(#ring-l);
}

.panes {
  marker: url(#pane);
}

.letters {
  fill: var(--line);
  stroke: none;
  font-size: 84px;
  font-weight: 400;
}

.sprites {
  display: none;
}

/* Conversation */
.chat {
  display: flex;
  flex-direction: column;
  align-items: flex-start;
  gap: 12px;
  padding: 18px 46px 34px;
}

.bubble {
  position: relative;
  display: flex;
  align-items: flex-end;
  gap: 34px;
  max-width: 90%;
  padding: 14px 28px 12px 26px;
  border-radius: 32px;
}

.bubble p {
  margin: 0 0 6px;
  font-size: 44px;
  line-height: 60px;
}

.out {
  align-self: flex-end;
  padding-right: 26px;
  background: var(--green);
  --meta: #9fbdaf;
}

.in {
  background: var(--gray);
  --meta: #9b9c9b;
}

.long {
  gap: 0;
}

.long .meta {
  margin-left: -124px;
}

.turn {
  margin-top: 24px;
}

.meta {
  display: flex;
  flex: none;
  align-items: center;
  gap: 8px;
  color: var(--meta);
}

time {
  font-size: 32px;
  font-weight: 300;
  font-variant-numeric: tabular-nums;
  line-height: 40px;
  white-space: nowrap;
}

.checks {
  width: 42px;
  height: 28px;
  fill: none;
  stroke: var(--meta);
  stroke-width: 10;
  stroke-linecap: round;
  stroke-linejoin: round;
}

.tail {
  position: absolute;
  right: -17px;
  bottom: -1px;
  width: 28px;
  height: 30px;
  fill: var(--green);
}

.in .tail {
  right: auto;
  left: -17px;
  fill: var(--gray);
  transform: scaleX(-1);
}

.rofl {
  width: 56px;
  height: 54px;
  vertical-align: -9px;
}

.sticker {
  display: flex;
  flex-direction: column;
  align-items: flex-start;
  gap: 23px;
  margin-top: 51px;
}

.cry {
  width: 150px;
  height: 150px;
  margin-left: 5px;
}

.pill {
  padding: 14px 28px 13px 26px;
  border-radius: 24px;
  background: var(--gray);
  color: #9b9c9b;
}
```
